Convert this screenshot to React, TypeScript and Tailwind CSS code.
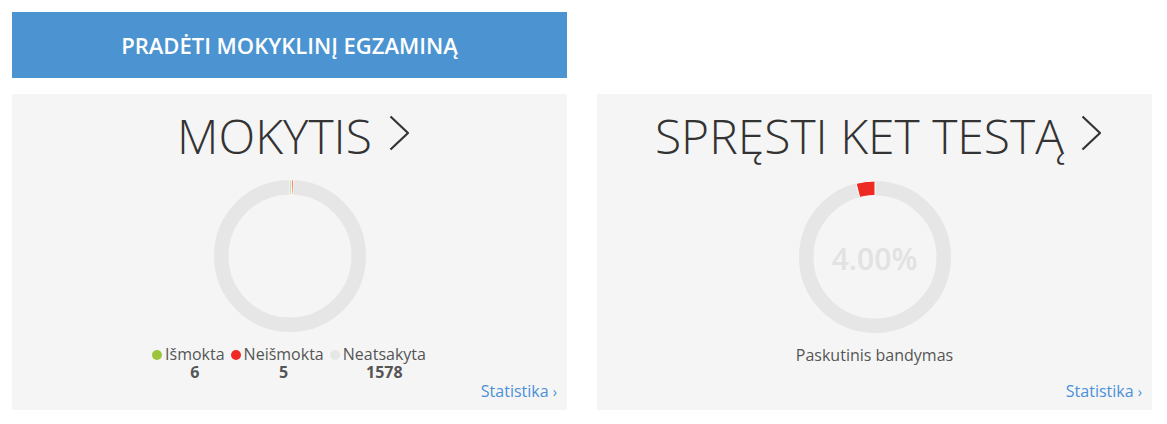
import React from "react";

const CX = 76;
const CY = 76;
const RO = 76;
const RI = 61.5;

function pt(r: number, deg: number) {
  const a = ((deg - 90) * Math.PI) / 180;
  return [CX + r * Math.cos(a), CY + r * Math.sin(a)];
}

function sector(a0: number, a1: number) {
  const [x0, y0] = pt(RO, a0);
  const [x1, y1] = pt(RO, a1);
  const [x2, y2] = pt(RI, a1);
  const [x3, y3] = pt(RI, a0);
  const large = a1 - a0 > 180 ? 1 : 0;
  return `M${x0} ${y0} A${RO} ${RO} 0 ${large} 1 ${x1} ${y1} L${x2} ${y2} A${RI} ${RI} 0 ${large} 0 ${x3} ${y3} Z`;
}

function Donut({ segs, children }: { segs: { a0: number; a1: number; color: string }[]; children?: React.ReactNode }) {
  return (
    <div className="relative w-[152px] h-[152px] mx-auto">
      <svg width="152" height="152" viewBox="0 0 152 152">
        <circle cx={CX} cy={CY} r={(RO + RI) / 2} fill="none" stroke="#e6e6e6" strokeWidth={RO - RI} />
        {segs.map((s, i) => (
          <path key={i} d={sector(s.a0, s.a1)} fill={s.color} stroke="#ffffff" strokeWidth="1" />
        ))}
      </svg>
      {children}
    </div>
  );
}

function Chevron() {
  return (
    <svg width="20" height="36" viewBox="0 0 20 36" className="ml-[17px] mt-[3px]">
      <polyline points="1.5,1.5 19,18 1.5,34.5" fill="none" stroke="#333333" strokeWidth="2.2" />
    </svg>
  );
}

function Title({ text }: { text: string }) {
  return (
    <div className="flex items-start justify-center pt-[18px] h-[87px] pl-[7px]">
      <span className="text-[48px] leading-[48px] font-light text-[#333333]">{text}</span>
      <Chevron />
    </div>
  );
}

function Stat() {
  return (
    <div className="mt-auto flex justify-end pr-[10px] pb-[8px]">
      <span className="text-[16px] leading-[20px] text-[#4a90d9]">
        Statistika <span className="text-[14px]">›</span>
      </span>
    </div>
  );
}

function LegendItem({ color, label, value }: { color: string; label: string; value: string }) {
  return (
    <div className="flex items-start">
      <span className="w-[10px] h-[10px] rounded-full mt-[5px] mr-[3px]" style={{ backgroundColor: color }} />
      <div className="flex flex-col items-center">
        <span className="text-[16px] leading-[18px] text-[#555555]">{label}</span>
        <span className="text-[16px] leading-[18px] font-bold text-[#555555]">{value}</span>
      </div>
    </div>
  );
}

export default function App() {
  return (
    <div className="bg-white w-[1167px] h-[424px] pt-[12px] pl-[12px]" style={{ fontFamily: '"Open Sans", "Liberation Sans", sans-serif' }}>
      <div className="w-[1140px] grid grid-cols-2 gap-x-[30px]">
        <div className="bg-[#4b94d1] h-[66px] flex items-center justify-center">
          <span className="text-white text-[22px] font-semibold">PRADĖTI MOKYKLINĮ EGZAMINĄ</span>
        </div>
        <div />
        <div className="bg-[#f5f5f5] h-[316px] mt-[16px] flex flex-col">
          <Title text="MOKYTIS" />
          <Donut
            segs={[
              { a0: 0, a1: 1.4, color: "#9bc53d" },
              { a0: 1.4, a1: 2.6, color: "#ee2a24" },
            ]}
          />
          <div className="mt-[13px] flex justify-center gap-x-[6px] pr-[1px]">
            <LegendItem color="#9bc53d" label="Išmokta" value="6" />
            <LegendItem color="#ee2a24" label="Neišmokta" value="5" />
            <LegendItem color="#e6e6e6" label="Neatsakyta" value="1578" />
          </div>
          <Stat />
        </div>
        <div className="bg-[#f5f5f5] h-[316px] mt-[16px] flex flex-col">
          <Title text="SPRĘSTI KET TESTĄ" />
          <Donut segs={[{ a0: -14.4, a1: 0, color: "#ee2a24" }]}>
            <div className="absolute inset-0 flex items-center justify-center">
              <span className="text-[30px] font-semibold text-[#e2e2e2] mt-[2px]">4.00%</span>
            </div>
          </Donut>
          <div className="mt-[13px] flex justify-center">
            <span className="text-[16px] leading-[18px] text-[#555555]">Paskutinis bandymas</span>
          </div>
          <Stat />
        </div>
      </div>
    </div>
  );
}
